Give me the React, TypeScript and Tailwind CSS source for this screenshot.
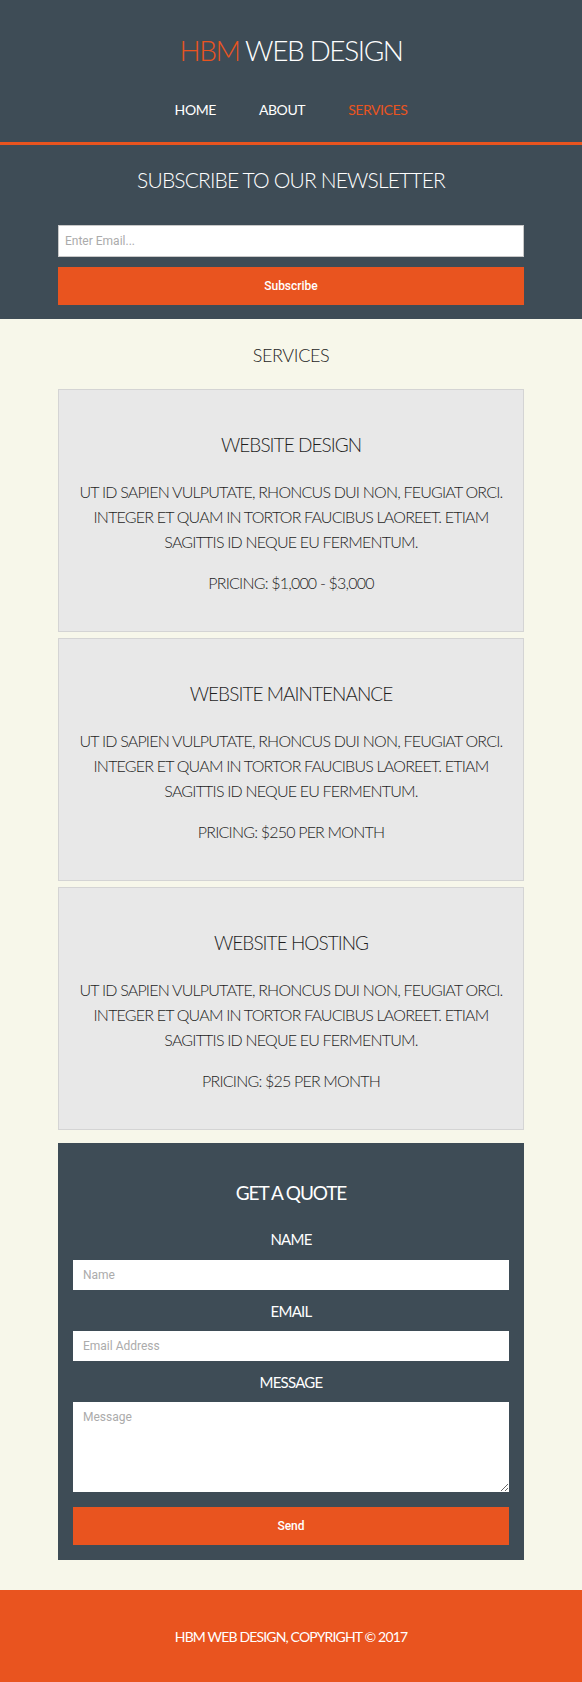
import React from "react";

const para = [
  "UT ID SAPIEN VULPUTATE, RHONCUS DUI NON, FEUGIAT ORCI.",
  "INTEGER ET QUAM IN TORTOR FAUCIBUS LAOREET. ETIAM",
  "SAGITTIS ID NEQUE EU FERMENTUM.",
];

function Card({ title, price }: { title: string; price: string }) {
  return (
    <div className="border border-[#d4d4d4] bg-[#e8e8e8] pt-[41px] pb-[36px] text-center text-[#1e1e1e]">
      <h3 className="text-[19px] leading-[28px] font-light tracking-[-0.05em]">{title}</h3>
      <p className="mt-[20px] text-[16px] leading-[25px] font-light tracking-[-0.05em]">
        {para.map((l) => (
          <span key={l} className="block whitespace-nowrap">
            {l}
          </span>
        ))}
      </p>
      <p className="mt-[16px] text-[16px] leading-[25px] font-light tracking-[-0.05em]">{price}</p>
    </div>
  );
}

const inputCls =
  "block w-full bg-white font-['Roboto',sans-serif] text-[12px] text-[#333] placeholder:text-[#ababab] outline-none";

export default function App() {
  return (
    <div className="min-h-screen bg-[#f7f7ea] font-['Lato',sans-serif]">
      <header className="bg-[#3e4c56]">
        <div className="pt-[30px] text-center">
          <h1 className="text-[28px] leading-[40px] font-light tracking-[-0.05em] text-white">
            <span className="text-[#e9541f]">HBM</span> WEB DESIGN
          </h1>
          <nav className="mt-[29px] flex justify-center gap-[43px] text-[14px] leading-[22px] tracking-[-0.03em]">
            <a className="text-white">HOME</a>
            <a className="text-white">ABOUT</a>
            <a className="text-[#e9541f]">SERVICES</a>
          </nav>
        </div>
        <div className="mt-[21px] h-[3px] bg-[#e9541f]" />
        <div className="px-[58px] pt-[20px] pb-[14px]">
          <h2 className="text-center text-[21px] leading-[30px] font-light tracking-[-0.04em] text-white">
            SUBSCRIBE TO OUR NEWSLETTER
          </h2>
          <input
            placeholder="Enter Email..."
            className={`mt-[30px] h-[32px] border border-[#c8c8c8] px-[6px] ${inputCls}`}
          />
          <button className="mt-[10px] block h-[38px] w-full bg-[#e9541f] font-['Roboto',sans-serif] text-[12px] font-medium text-white">
            Subscribe
          </button>
        </div>
      </header>

      <main className="px-[58px] pt-[22px]">
        <h2 className="text-center text-[18px] leading-[28px] font-light tracking-[-0.02em] text-[#1e1e1e]">
          SERVICES
        </h2>
        <div className="mt-[20px] flex flex-col gap-[6px]">
          <Card title="WEBSITE DESIGN" price="PRICING: $1,000 - $3,000" />
          <Card title="WEBSITE MAINTENANCE" price="PRICING: $250 PER MONTH" />
          <Card title="WEBSITE HOSTING" price="PRICING: $25 PER MONTH" />
        </div>

        <div className="mt-[13px] bg-[#3e4c56] px-[15px] pt-[35px] pb-[15px] text-center text-white">
          <h3 className="text-[19px] leading-[30px] tracking-[-0.06em]">GET A QUOTE</h3>
          <div className="mt-[19px] text-[15px] leading-[24px] tracking-[-0.05em]">NAME</div>
          <input placeholder="Name" className={`mt-[9px] h-[30px] px-[10px] ${inputCls}`} />
          <div className="mt-[9px] text-[15px] leading-[24px] tracking-[-0.05em]">EMAIL</div>
          <input placeholder="Email Address" className={`mt-[8px] h-[30px] px-[10px] ${inputCls}`} />
          <div className="mt-[9px] text-[15px] leading-[24px] tracking-[-0.05em]">MESSAGE</div>
          <textarea
            placeholder="Message"
            className={`mt-[8px] h-[90px] px-[10px] py-[6px] ${inputCls}`}
          />
          <button className="mt-[15px] block h-[38px] w-full bg-[#e9541f] font-['Roboto',sans-serif] text-[12px] font-medium text-white">
            Send
          </button>
        </div>
      </main>

      <footer className="mt-[30px] flex h-[92px] items-center justify-center bg-[#e9541f] text-[14px] tracking-[-0.06em] text-white">
        HBM WEB DESIGN, COPYRIGHT © 2017
      </footer>
    </div>
  );
}
